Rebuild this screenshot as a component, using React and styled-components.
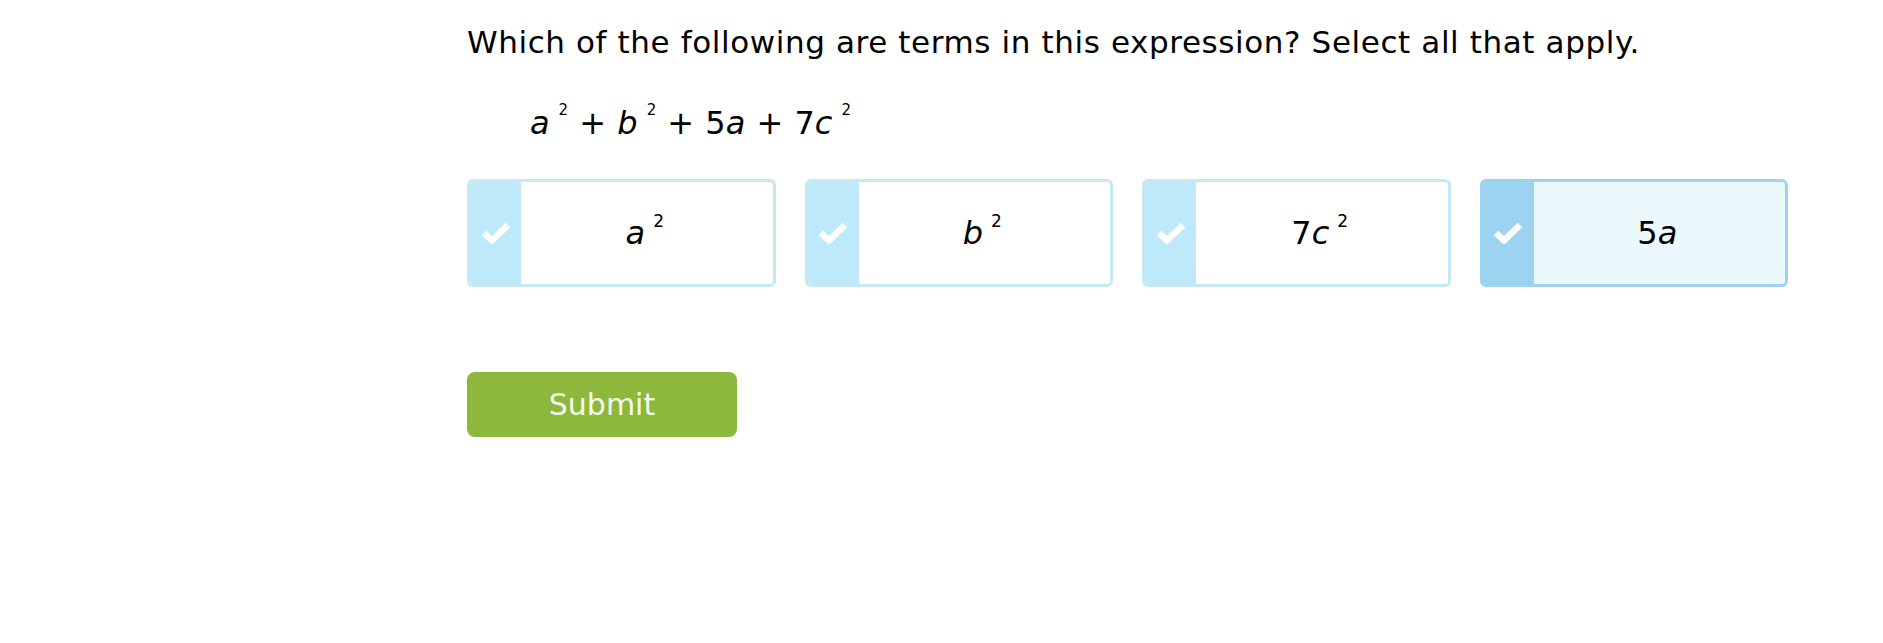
import React, { useState } from "react";
import styled, { createGlobalStyle } from "styled-components";

const GlobalStyle = createGlobalStyle`
  body {
    margin: 0;
    background: #ffffff;
    font-family: "DejaVu Sans", Verdana, sans-serif;
    color: #000000;
  }
`;

const Page = styled.div`
  padding: 24px 0 0 467px;
`;

const Question = styled.div`
  font-size: 31px;
  line-height: 37px;
  letter-spacing: 0.6px;
`;

const Expression = styled.div`
  margin-top: 42px;
  padding-left: 63px;
  font-size: 32px;
  line-height: 40px;
  word-spacing: 1px;
  white-space: pre;
`;

const Var = styled.i`
  font-style: italic;
`;

const Sup = styled.span`
  font-size: ${(p) => (p.small ? "15px" : "17px")};
  margin-left: ${(p) => (p.small ? "9px" : "8px")};
  vertical-align: ${(p) => (p.small ? "19px" : "17px")};
  line-height: 0;
`;

const Choices = styled.div`
  margin-top: 36px;
  display: grid;
  grid-template-columns: repeat(4, 308.5px);
  gap: 29px;
`;

const Card = styled.div`
  display: flex;
  height: 108px;
  box-sizing: border-box;
  border: 3px solid ${(p) => (p.selected ? "#9ed3ee" : "#c4e8f4")};
  border-radius: 6px;
  overflow: hidden;
  background: ${(p) => (p.selected ? "#ebf8fd" : "#ffffff")};
  cursor: pointer;
`;

const Strip = styled.div`
  width: 51px;
  flex: none;
  display: flex;
  align-items: center;
  justify-content: center;
  background: ${(p) => (p.selected ? "#9cd3f0" : "#bde9fb")};
`;

const Label = styled.div`
  flex: 1;
  display: flex;
  align-items: center;
  justify-content: center;
  font-size: 32px;
  padding-right: 4px;
`;

const Term = styled.span`
  white-space: nowrap;
`;

const SubmitButton = styled.button`
  margin-top: 85px;
  width: 270px;
  height: 65px;
  border: none;
  border-radius: 8px;
  background: #8cb93b;
  color: #f7fbef;
  font-family: "DejaVu Sans", Verdana, sans-serif;
  font-size: 30px;
  cursor: pointer;
`;

const Check = () => (
  <svg width="30" height="24" viewBox="0 0 30 24">
    <polyline
      points="3,12 11,19.5 27,4"
      fill="none"
      stroke="#ffffff"
      strokeWidth="6.5"
      strokeLinejoin="round"
    />
  </svg>
);

const choices = [
  { id: "a2", content: <><Var>a</Var><Sup>2</Sup></> },
  { id: "b2", content: <><Var>b</Var><Sup>2</Sup></> },
  { id: "7c2", content: <>7<Var>c</Var><Sup>2</Sup></> },
  { id: "5a", content: <>5<Var>a</Var></> },
];

export default function App() {
  const [selected, setSelected] = useState(["5a"]);
  const toggle = (id) =>
    setSelected((s) => (s.includes(id) ? s.filter((x) => x !== id) : [...s, id]));

  return (
    <>
      <GlobalStyle />
      <Page>
        <Question>
          Which of the following are terms in this expression? Select all that apply.
        </Question>
        <Expression>
          <Var>a</Var><Sup small>2</Sup>{" + "}<Var>b</Var><Sup small>2</Sup>{" + 5"}<Var>a</Var>
          {" + 7"}<Var>c</Var><Sup small>2</Sup>
        </Expression>
        <Choices>
          {choices.map((c) => {
            const on = selected.includes(c.id);
            return (
              <Card key={c.id} selected={on} onClick={() => toggle(c.id)}>
                <Strip selected={on}>
                  <Check />
                </Strip>
                <Label>
                  <Term>{c.content}</Term>
                </Label>
              </Card>
            );
          })}
        </Choices>
        <SubmitButton>Submit</SubmitButton>
      </Page>
    </>
  );
}
